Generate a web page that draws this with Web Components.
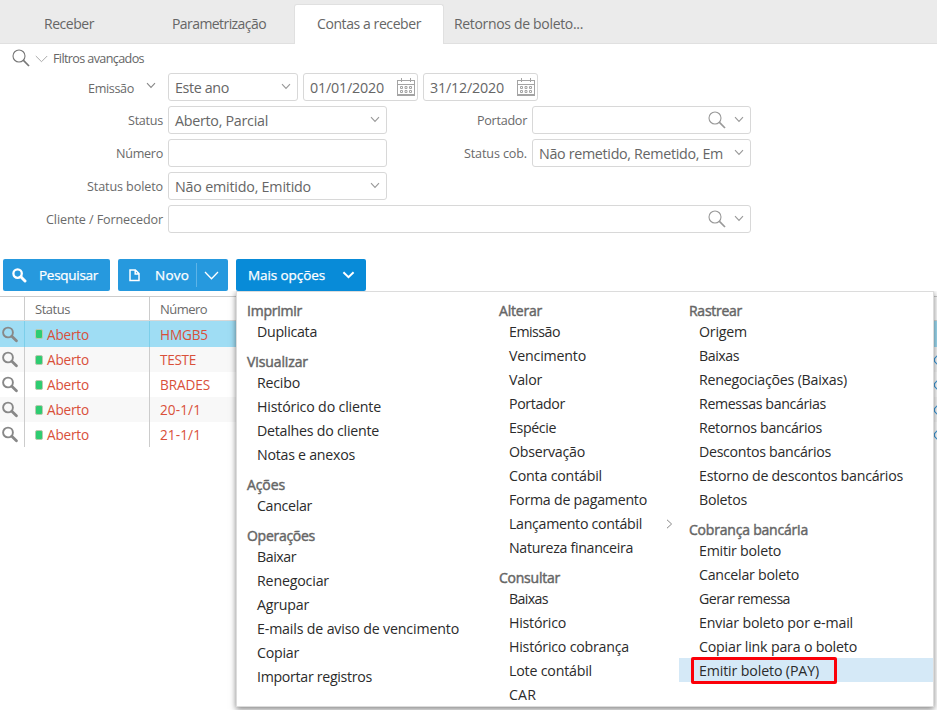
<!DOCTYPE html>
<html lang="pt-BR">
<head>
<meta charset="utf-8">
<title>Contas a receber</title>
<style>
html,body{margin:0;padding:0;background:#fff;overflow:hidden}
body{font-family:"Open Sans","Noto Sans",sans-serif;color:#666;width:937px;height:710px}
</style>
</head>
<body>
<receivables-page></receivables-page>
<script>
const define=(name,cls)=>customElements.define(name,cls);
class Base extends HTMLElement{
  connectedCallback(){
    if(!this.shadowRoot)this.attachShadow({mode:'open'});
    this.shadowRoot.innerHTML=this.render();
    this.ready&&this.ready();
  }
  a(n,d=''){return this.getAttribute(n)??d}
}

/* A label that spaces its letters to fill a given width. */
define('fit-text',class extends Base{
  render(){return `<style>:host{display:inline-block;white-space:nowrap;flex:none}span{display:inline-block}</style><span><slot></slot></span>`}
  ready(){
    const w=+this.a('w',0);if(!w)return;
    const s=this.shadowRoot.querySelector('span');
    const n=this.textContent.length;
    const nat=s.getBoundingClientRect().width;
    s.style.letterSpacing=((w-nat)/n).toFixed(3)+'px';
    this.style.width=w+'px';
  }
});

const ICONS={
  lens:[18,18,'<circle cx="7" cy="7" r="6" fill="none" stroke="currentColor" stroke-width="1.1"/><path d="M11.2 11.2L17 17" stroke="currentColor" stroke-width="1.7"/>'],
  lensBold:[15,15,'<circle cx="5.6" cy="5.6" r="4.2" fill="none" stroke="currentColor" stroke-width="2.3"/><path d="M8.8 8.8L13 13" stroke="currentColor" stroke-width="3" stroke-linecap="round"/>'],
  lensRow:[16,17,'<circle cx="6" cy="6.5" r="4.9" fill="none" stroke="currentColor" stroke-width="1.9"/><path d="M9.8 10.3L14.4 14.8" stroke="currentColor" stroke-width="2.8" stroke-linecap="round"/>'],
  down:[10,7,'<path d="M1 1.2L5 5.4L9 1.2" fill="none" stroke="currentColor" stroke-width="1.1"/>'],
  downWide:[13,8,'<path d="M.8 1L6.5 6.7L12.2 1" fill="none" stroke="currentColor" stroke-width="1"/>'],
  downLine:[15,9,'<path d="M1 1L7.5 7.7L14 1" fill="none" stroke="currentColor" stroke-width="1.3"/>'],
  downBold:[13,8,'<path d="M1.4 1.2L6.5 6.1L11.6 1.2" fill="none" stroke="currentColor" stroke-width="2"/>'],
  right:[7,10,'<path d="M1 .8L5.6 5L1 9.2" fill="none" stroke="currentColor" stroke-width="1"/>'],
  page:[11,13,'<path d="M1 1H6.4L10 4.6V11.6H1Z M6.2 1V5H10" fill="none" stroke="currentColor" stroke-width="1.5"/>'],
  cal:[18,18,'<path d="M.5 3V17M17.5 3V17" fill="none" stroke="currentColor"/><path d="M0 2.5H18M0 6.5H18M4.5 0V4M13.5 0V4" fill="none" stroke="currentColor"/><path d="M0 17H18" stroke="currentColor" stroke-width="2"/><path d="M3.5 8.5h2v2h-2zM8 8.5h2v2h-2zM12.5 8.5h2v2h-2zM3.5 12.5h2v2h-2zM8 12.5h2v2h-2zM12.5 12.5h2v2h-2z" fill="none" stroke="currentColor"/>'],
  ring:[10,10,'<path d="M3.5 .5H6.5L9.5 3.5V6.5L6.5 9.5H3.5L.5 6.5V3.5Z" fill="none" stroke="currentColor" stroke-width="1.2"/>']
};
define('ui-icon',class extends Base{
  render(){const [w,h,p]=ICONS[this.a('name')];
    return `<style>:host{display:block;flex:none;width:${w}px;height:${h}px}svg{display:block}</style><svg width="${w}" height="${h}" viewBox="0 0 ${w} ${h}">${p}</svg>`}
});

define('tab-bar',class extends Base{
  render(){return `<style>:host{display:flex;height:44px;box-sizing:border-box;background:#ebebeb;box-shadow:inset 0 -1px #e0e0e0;align-items:flex-end}</style><slot></slot>`}
});
define('tab-item',class extends Base{
  render(){const on=this.hasAttribute('active');
    return `<style>:host{display:flex;box-sizing:border-box;height:${on?40:39}px;width:${this.a('width')}px;justify-content:flex-start;padding-left:${this.a('pad')}px;padding-bottom:2px;align-items:center;font-size:14px;line-height:20px;${on?'background:#fff;border:1px solid #e0e0e0;border-bottom:0;border-radius:3px 3px 0 0;':''}}</style><fit-text w="${this.a('w')}">${this.textContent}</fit-text>`}
});

define('filter-row',class extends Base{
  render(){return `<style>:host{display:flex;height:28px;margin-bottom:5px;align-items:center}</style><slot></slot>`}
});
define('filter-label',class extends Base{
  render(){return `<style>:host{display:flex;width:${this.a('width',163)}px;justify-content:flex-end;align-items:center;font-size:12.6px;line-height:18px;color:#6a6a6a;margin-right:5px;padding-top:${this.hasAttribute('menu')?3:2}px;box-sizing:border-box}
  ui-icon{margin:-6px 7px 0 12px;color:#888}</style><fit-text w="${this.a('w')}">${this.textContent}</fit-text>${this.hasAttribute('menu')?'<ui-icon name="down"></ui-icon>':''}`}
});
define('filter-field',class extends Base{
  render(){const t=this.a('text'),ic=this.a('icons').split(' ').filter(Boolean);
    return `<style>:host{display:flex;box-sizing:border-box;flex:none;width:${this.a('width')}px;height:28px;border:1px solid #d8d8d8;border-radius:3px;align-items:center;background:#fff;margin-right:${this.a('gap',5)}px;padding:0 6px;color:#666}
    .t{flex:none;font-size:14.3px;line-height:22px;padding-top:2px}
    .i{display:flex;margin-left:auto;align-items:center;gap:8px;color:#999}
    ui-icon[name=down]{margin-right:0;margin-top:-2px}ui-icon[name=cal]{margin-right:-4px;margin-top:0;color:#a4a4a4}ui-icon[name=lens]{color:#999;margin-top:-1px}</style>
    ${t?`<div class="t"><fit-text w="${this.a('w')}">${t}</fit-text></div>`:''}<div class="i">${ic.map(n=>`<ui-icon name="${n}"></ui-icon>`).join('')}</div>`}
});

define('action-button',class extends Base{
  render(){return `<style>:host{display:flex;box-sizing:border-box;width:${this.a('width')}px;height:32px;background:${this.hasAttribute('open')?'#088bd8':'#2699de'};border-radius:2px;color:#fff;align-items:center;padding:0 ${this.a('end',12)}px 0 ${this.a('start',10)}px;font-size:13.5px;font-weight:500;line-height:20px;justify-content:space-between;-webkit-text-stroke:.25px #fff}
  ::slotted(.split){width:1px;height:24px;background:#5db4e8}</style><slot></slot>`}
});

define('grid-row',class extends Base{
  render(){const k=this.a('kind');const head=k==='head';
    const bg={head:'#fff',sel:'#9fddf4',alt:'#f8f8f8',even:'#fff'}[k], line=k==='sel'?'#7ccfea':'#ccc';
    return `<style>:host{display:grid;grid-template-columns:25px 125px 1fr 4px;height:${k==='sel'?26:head?24:25}px;background:${bg};box-sizing:border-box;${head?'border-bottom:1px solid #d8d8d8;font-size:13px;color:#6b6b6b;':'font-size:13.6px;color:#d9503a;'}line-height:20px}
    div{display:flex;align-items:center;box-sizing:border-box}.a,.b{border-right:1px solid ${line}}.a{padding:0 0 0 2px;color:#888}.b{padding-left:${head?10:11}px}.c{padding-left:10px}.d{overflow:hidden;color:#3d9bdc;padding-left:1px}
    i{width:6px;height:8px;background:#2ecc71;border:1px solid #b9c9b0;border-radius:2px;margin-right:4px;margin-left:-1px}fit-text{margin-top:${head?0:1}px}</style>
    <div class="a">${head?'':'<ui-icon name="lensRow"></ui-icon>'}</div><div class="b">${head?'':'<i></i>'}<fit-text w="${head?35:42}">${head?'Status':'Aberto'}</fit-text></div><div class="c"><fit-text w="${this.a('w')}">${this.a('number')}</fit-text></div><div class="d">${head||k==='sel'?'':'<ui-icon name="ring"></ui-icon>'}</div>`}
});
define('data-grid',class extends Base{
  render(){return `<style>:host{display:block;border-top:1px solid #ccc}</style><slot></slot>`}
});

/* Columns of grouped entries; "label|width" per entry. */
const MENU=[
 [['Imprimir',55,['Duplicata|60']],['Visualizar',61,['Recibo|43','Histórico do cliente|124','Detalhes do cliente|122','Notas e anexos|98']],['Ações',38,['Cancelar|55']],['Operações',68,['Baixar|39','Renegociar|72','Agrupar|52','E-mails de aviso de vencimento|202','Copiar|42','Importar registros|115']]],
 [['Alterar',43,['Emissão|51','Vencimento|77','Valor|33','Portador|56','Espécie|47','Observação|76','Conta contábil|93','Forma de pagamento|138','Lançamento contábil|133|sub','Natureza financeira|124']],['Consultar',61,['Baixas|39','Histórico|57','Histórico cobrança|120','Lote contábil|83','CAR|27']]],
 [['Rastrear',53,['Origem|48','Baixas|40','Renegociações (Baixas)|148','Remessas bancárias|127','Retornos bancários|123','Descontos bancários|132','Estorno de descontos bancários|204','Boletos|48']],['Cobrança bancária',119,['Emitir boleto|82','Cancelar boleto|100','Gerar remessa|91','Enviar boleto por e-mail|154','Copiar link para o boleto|158','Emitir boleto (PAY)|120|on']]]
];
define('menu-entry',class extends Base{
  render(){const on=this.a('state')==='on',sub=this.a('state')==='sub';
    return `<style>:host{display:flex;position:relative;align-items:center;height:24px;box-sizing:border-box;padding:1px 7px 0 20px;font-size:14.2px;line-height:22px;color:#2b2b2b;${on?'background:#d5e9f7;':''}}
    ui-icon{margin-left:auto;margin-right:-1px;color:#888}.mark{position:absolute;left:12px;top:-1px;width:146px;height:27px;border:3px solid #fb0009;box-sizing:border-box;border-radius:2px}</style><fit-text w="${this.a('w')}">${this.textContent}</fit-text>${sub?'<ui-icon name="right"></ui-icon>':''}${on?'<div class="mark"></div>':''}`}
});
define('menu-group',class extends Base{
  render(){return `<style>:host{display:block;margin-bottom:9px}h3{margin:0;height:18px;padding:1px 0 0 10px;box-sizing:border-box;display:flex;align-items:center;font-weight:400;font-size:14px;line-height:18px;color:#666;-webkit-text-stroke:.45px #666}</style><h3><fit-text w="${this.a('w')}">${this.a('heading')}</fit-text></h3><slot></slot>`}
});
define('options-menu',class extends Base{
  render(){return `<style>:host{position:absolute;left:236px;top:291px;width:698px;height:416px;box-sizing:border-box;background:#fff;border:1px solid #dcdcdc;box-shadow:0 2px 6px rgba(0,0,0,.5);display:grid;grid-template-columns:252px 190px 254px;padding-top:9px;clip-path:inset(0 -10px -10px -10px)}</style>
  ${MENU.map(c=>`<div>${c.map(([h,w,e])=>`<menu-group heading="${h}" w="${w}">${e.map(x=>{const [l,lw,s='']=x.split('|');return `<menu-entry w="${lw}" state="${s}">${l}</menu-entry>`}).join('')}</menu-group>`).join('')}</div>`).join('')}`}
});

define('receivables-page',class extends Base{
  render(){return `<style>
  :host{display:block;position:relative;width:937px;height:710px;overflow:hidden;background:#fff}
  .adv{display:flex;height:29px;align-items:center;padding-left:13px;font-size:12.6px;line-height:18px;box-sizing:border-box}
  .adv fit-text{margin:1px 0 0 5px}.adv ui-icon[name=lens]{color:#777;margin-top:-1px;margin-left:-1px}.adv ui-icon[name=downWide]{margin-left:5px;margin-top:1px;color:#aaa}
  .actions{display:flex;gap:8px;padding:21px 0 0 3px;height:32px;margin-bottom:5px}
  .actions fit-text{margin-top:-1px}.actions ui-icon[name=downBold],.actions ui-icon[name=downLine]{margin-right:-1px}
  </style>
  <tab-bar><tab-item width="147" pad="44" w="50">Receber</tab-item><tab-item width="147" pad="25" w="94">Parametrização</tab-item><tab-item active width="150" pad="22" w="104">Contas a receber</tab-item><tab-item width="150" pad="10" w="129">Retornos de boleto...</tab-item></tab-bar>
  <div class="adv"><ui-icon name="lens"></ui-icon><ui-icon name="downWide"></ui-icon><fit-text w="91">Filtros avançados</fit-text></div>
  <filter-row><filter-label menu w="46">Emissão</filter-label><filter-field width="130" text="Este ano" w="54" icons="down"></filter-field><filter-field width="115" text="01/01/2020" w="74" icons="cal"></filter-field><filter-field width="115" text="31/12/2020" w="74" icons="cal"></filter-field></filter-row>
  <filter-row><filter-label w="35">Status</filter-label><filter-field width="219" gap="0" text="Aberto, Parcial" w="93" icons="down"></filter-field><filter-label width="140" w="50">Portador</filter-label><filter-field width="219" icons="lens down"></filter-field></filter-row>
  <filter-row><filter-label w="47">Número</filter-label><filter-field width="219" gap="0"></filter-field><filter-label width="140" w="63">Status cob.</filter-label><filter-field width="219" text="Não remetido, Remetido, Em" w="184" icons="down"></filter-field></filter-row>
  <filter-row><filter-label w="76">Status boleto</filter-label><filter-field width="219" text="Não emitido, Emitido" w="136" icons="down"></filter-field></filter-row>
  <filter-row><filter-label w="117">Cliente / Fornecedor</filter-label><filter-field width="583" icons="lens down"></filter-field></filter-row>
  <div class="actions">
   <action-button width="107" start="9"><ui-icon name="lensBold"></ui-icon><fit-text w="59">Pesquisar</fit-text></action-button>
   <action-button width="110" start="11" end="10"><ui-icon name="page"></ui-icon><fit-text w="34" style="margin-left:8px">Novo</fit-text><span class="split"></span><ui-icon name="downLine"></ui-icon></action-button>
   <action-button open width="130" start="12"><fit-text w="77">Mais opções</fit-text><ui-icon name="downBold"></ui-icon></action-button>
  </div>
  <data-grid><grid-row kind="head" number="Número" w="47"></grid-row><grid-row kind="sel" number="HMGB5" w="48"></grid-row><grid-row kind="alt" number="TESTE" w="36"></grid-row><grid-row kind="even" number="BRADES" w="50"></grid-row><grid-row kind="alt" number="20-1/1" w="41"></grid-row><grid-row kind="even" number="21-1/1" w="41"></grid-row></data-grid>
  <options-menu></options-menu>`}
});
</script>
</body>
</html>
